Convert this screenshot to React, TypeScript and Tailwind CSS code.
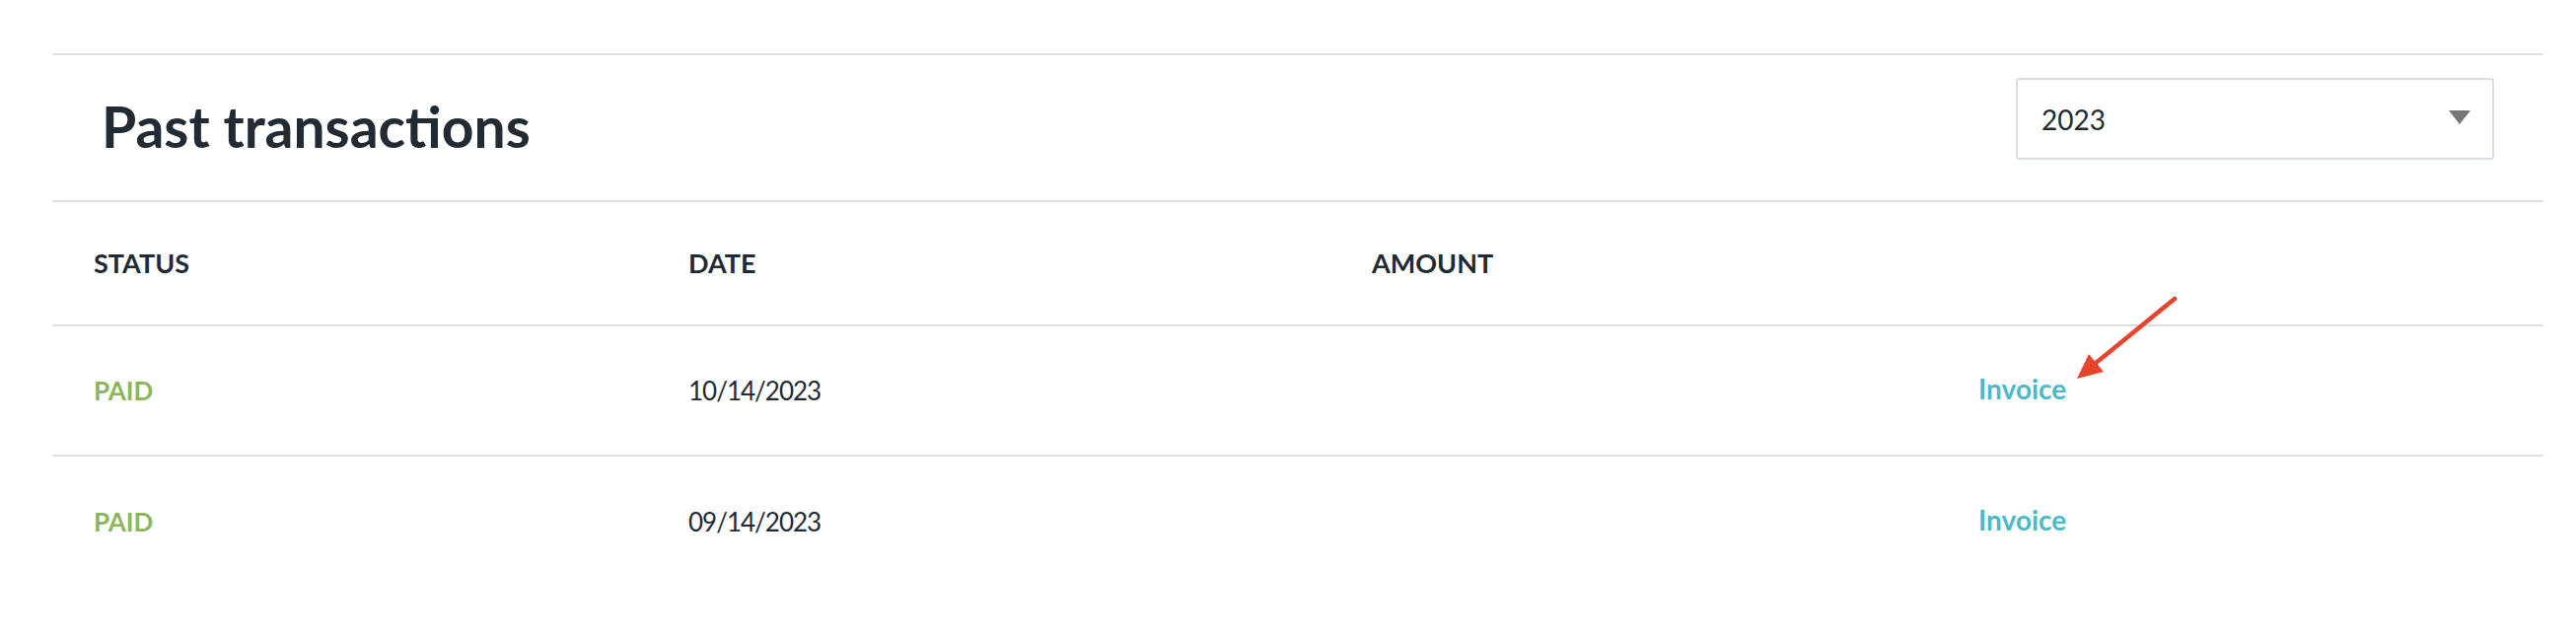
const rows = [
  { status: "PAID", date: "10/14/2023" },
  { status: "PAID", date: "09/14/2023" },
];

function YearSelect() {
  return (
    <div className="mt-[23px] flex h-[83px] w-[485px] items-center justify-between rounded-[4px] border-2 border-[#d9dee3] pl-[24px] pr-[22px]">
      <span className="text-[28px] text-[#1f2a33]">2023</span>
      <svg width="22" height="14" viewBox="0 0 22 14" className="mt-[-4px]">
        <polygon points="0,0 22,0 11,14" fill="#767676" />
      </svg>
    </div>
  );
}

function Arrow() {
  return (
    <svg
      className="absolute left-[2098px] top-[297px]"
      width="115"
      height="95"
      viewBox="0 0 115 95"
    >
      <line x1="107" y1="6" x2="26" y2="72" stroke="#e8442b" strokeWidth="4.5" strokeLinecap="round" />
      <polygon points="8,87 20,62 35,80" fill="#e8442b" />
    </svg>
  );
}

export default function App() {
  return (
    <div className="relative h-[646px] w-full bg-white pl-[53px] pr-[33px] pt-[54px] font-['Lato',sans-serif]">
      <div className="flex h-[151px] justify-between border-y-2 border-[#dde1e5] px-[50px]">
        <h1 className="mt-[-2px] self-center text-[57px] font-bold leading-none text-[#222b33]">
          Past transactions
        </h1>
        <YearSelect />
      </div>

      <div className="grid h-[126px] grid-cols-[603px_693px_615px_1fr] items-center border-b-2 border-[#dcdcdc] px-[42px] text-[27px] font-bold text-[#1f2a33]">
        <span>STATUS</span>
        <span>DATE</span>
        <span>AMOUNT</span>
        <span />
      </div>

      {rows.map((row, idx) => (
        <div
          key={idx}
          className={`grid h-[132px] grid-cols-[603px_693px_615px_1fr] items-center px-[42px] ${
            idx < rows.length - 1 ? "border-b-2 border-[#dcdcdc]" : ""
          }`}
        >
          <span className="text-[26px] font-bold text-[#8cb55a]">{row.status}</span>
          <span className="text-[26px] tracking-[-1px] text-[#1f2a33]">{row.date}</span>
          <span />
          <span className="mt-[-4px] text-[28px] font-bold text-[#4db9c8]">Invoice</span>
        </div>
      ))}

      <Arrow />
    </div>
  );
}
